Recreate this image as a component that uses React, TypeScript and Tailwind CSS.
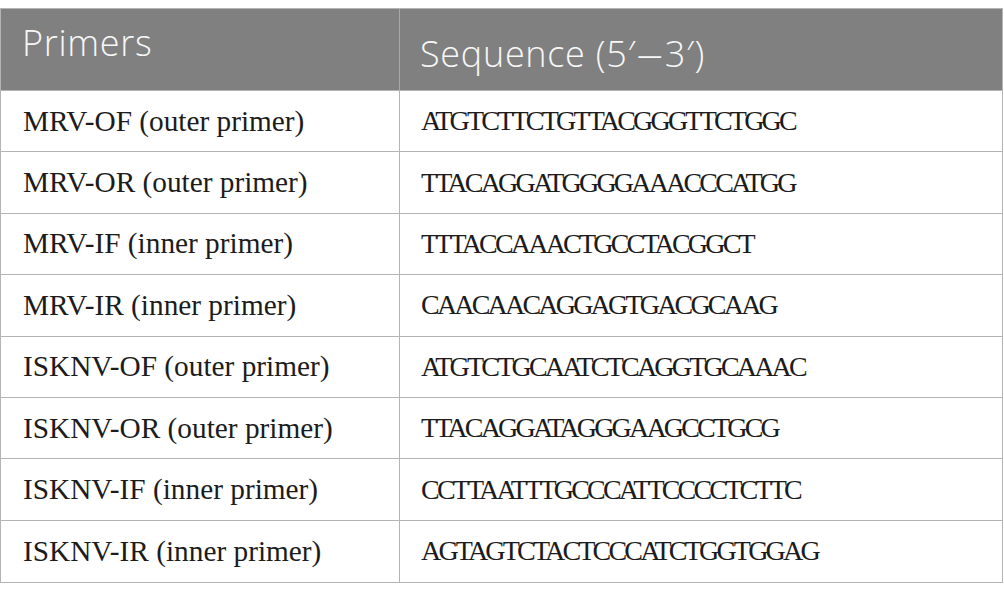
import React from "react";

const rows: [string, string][] = [
  ["MRV-OF (outer primer)", "ATGTCTTCTGTTACGGGTTCTGGC"],
  ["MRV-OR (outer primer)", "TTACAGGATGGGGAAACCCATGG"],
  ["MRV-IF (inner primer)", "TTTACCAAACTGCCTACGGCT"],
  ["MRV-IR (inner primer)", "CAACAACAGGAGTGACGCAAG"],
  ["ISKNV-OF (outer primer)", "ATGTCTGCAATCTCAGGTGCAAAC"],
  ["ISKNV-OR (outer primer)", "TTACAGGATAGGGAAGCCTGCG"],
  ["ISKNV-IF (inner primer)", "CCTTAATTTGCCCATTCCCCTCTTC"],
  ["ISKNV-IR (inner primer)", "AGTAGTCTACTCCCATCTGGTGGAG"],
];

export default function App() {
  return (
    <div className="w-[1004px] h-[600px] bg-white pt-[8px]">
      <div className="w-[1003px] border border-[#b4b4b4]">
        <div className="flex h-[82px] bg-[#808080] text-[#f7f7f7] border-b border-[#b4b4b4] font-['Open_Sans',sans-serif] font-light text-[36px] leading-none tracking-[0.7px]">
          <div className="w-[399px] border-r border-[#a8a8a8] pl-[21px] pt-[16px]">Primers</div>
          <div className="flex-1 pl-[20px] pt-[27px]">
            Sequence (5′<span className="inline-block scale-x-150 mx-[5px]">–</span>3′)
          </div>
        </div>
        {rows.map(([name, seq], i) => (
          <div
            key={name}
            className={`flex h-[61.4px] items-center font-['Liberation_Serif',serif] text-[#1c1c1c] leading-none ${
              i < rows.length - 1 ? "border-b border-[#b4b4b4]" : ""
            }`}
          >
            <div className="w-[399px] h-full flex items-center border-r border-[#b4b4b4] pl-[22px] text-[29.3px]">
              {name}
            </div>
            <div className="flex-1 h-full flex items-center pl-[21px] text-[28px] tracking-[-2.8px]">
              {seq}
            </div>
          </div>
        ))}
      </div>
    </div>
  );
}
